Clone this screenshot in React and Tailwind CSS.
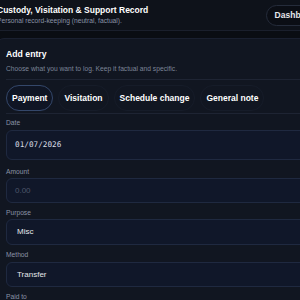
export default function App() {
  const tabs = ["Payment", "Visitation", "Schedule change", "General note"];
  return (
    <div className="w-[300px] h-[300px] overflow-hidden bg-[#0a0d13] font-['Liberation_Sans',sans-serif]">
      <header className="h-[31px] border-b border-[#1a1f2c] bg-[#0e121a] flex items-center justify-between">
        <div className="-ml-[3px] shrink-0">
          <h1 className="text-[8.5px] font-bold text-white leading-[11px]">Custody, Visitation &amp; Support Record</h1>
          <p className="text-[6.7px] text-[#8a93a6] leading-[9px]">Personal record-keeping (neutral, factual).</p>
        </div>
        <button className="shrink-0 -mr-[28px] h-[21px] px-[8px] rounded-full border border-[#252c3b] bg-[#0b0e15] text-[8.5px] font-bold text-[#e5e7eb]">
          Dashboard
        </button>
      </header>
      <div className="mt-[7px] -ml-[4px] w-[340px] rounded-lg bg-[#111621] border border-[#1a2030] pt-[8px] pl-[9px]">
        <h2 className="text-[8.7px] font-bold text-white leading-[14px]">Add entry</h2>
        <p className="text-[6.7px] text-[#7c8598] leading-[10px] mt-[3px]">Choose what you want to log. Keep it factual and specific.</p>
        <div className="border-t border-[#1e2433] mt-[5px] pt-[5px] pb-[2px] flex gap-[5px]">
          {tabs.map((t, i) => (
            <button
              key={t}
              className={
                "h-[26px] px-[5px] rounded-full text-[8.5px] font-bold text-white " +
                (i === 0 ? "border border-[#34476a] bg-[#0f1524]" : "border border-[#161c29] bg-[#111621]")
              }
            >
              {t}
            </button>
          ))}
        </div>
        <div className="border-t border-[#1e2433] pt-[4px]">
          <label className="block text-[6.7px] text-[#8a93a6] leading-[10px]">Date</label>
          <div className="mt-[2px] h-[30px] rounded-[6px] border border-[#1f2940] bg-[#101729] flex items-center pl-[8px] font-['DejaVu_Sans_Mono',monospace] text-[7.7px] text-[#d8dce5]">
            01/07/2026
          </div>
          <label className="block mt-[7px] text-[6.7px] text-[#8a93a6] leading-[10px]">Amount</label>
          <div className="mt-[1px] h-[25px] rounded-[6px] border border-[#1f2940] bg-[#101729] flex items-center pl-[8px] text-[8px] text-[#4d5669]">
            0.00
          </div>
          <label className="block mt-[5px] text-[6.7px] text-[#8a93a6] leading-[10px]">Purpose</label>
          <div className="mt-[1px] h-[26px] rounded-[6px] border border-[#1f2940] bg-[#101729] flex items-center pl-[10px] text-[8px] text-[#e5e7eb]">
            Misc
          </div>
          <label className="block mt-[5px] text-[6.7px] text-[#8a93a6] leading-[10px]">Method</label>
          <div className="mt-[2px] h-[25px] rounded-[6px] border border-[#1f2940] bg-[#101729] flex items-center pl-[10px] text-[8px] text-[#e5e7eb]">
            Transfer
          </div>
          <label className="block mt-[5px] text-[6.7px] text-[#8a93a6] leading-[10px]">Paid to</label>
        </div>
      </div>
    </div>
  );
}
